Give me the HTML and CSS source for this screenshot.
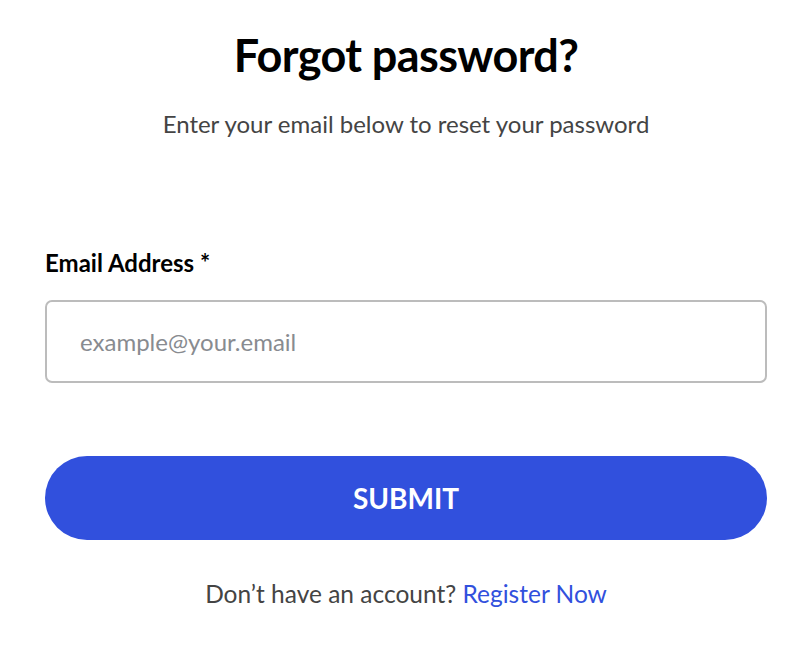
FILE: index.html
```html
<!DOCTYPE html>
<html lang="en">
  <head>
    <meta charset="UTF-8" />
    <meta name="viewport" content="width=device-width, initial-scale=1.0" />
    <title>Forgot password</title>
    <link rel="stylesheet" href="styles.css">
  </head>

  <body>
    <div class="container">
      <h1 class="title">Forgot password?</h1>
      <p class="subtitle">Enter your email below to reset your password</p>

      <form class="reset-form">
        <label class="field-label" for="email">Email Address *</label>
        <input id="email" class="field-input" type="email" placeholder="example@your.email" />
        <button class="submit-btn" type="button">SUBMIT</button>
      </form>

      <p class="register">Don’t have an account? <a href="#">Register Now</a></p>
    </div>
  </body>
</html>
```

FILE: styles.css
```css
body {
  margin: 0;
  background-color: #fff;
  font-family: Lato, "Noto Sans", sans-serif;
  color: #000;
}

.container {
  padding: 0 45px;
  display: flex;
  flex-direction: column;
}

.title {
  margin: 23px 0 0;
  text-align: center;
  font-size: 45px;
  font-weight: 700;
  line-height: 64px;
  letter-spacing: -0.6px;
}

.subtitle {
  margin: 22px 0 0;
  text-align: center;
  font-size: 24px;
  line-height: 30px;
  color: #444;
}

.reset-form {
  display: flex;
  flex-direction: column;
  margin-top: 109px;
}

.field-label {
  font-size: 24px;
  font-weight: 700;
  line-height: 30px;
}

.field-input {
  margin-top: 22px;
  height: 83px;
  box-sizing: border-box;
  border: 2px solid #bcbcbc;
  border-radius: 7px;
  padding: 0 33px;
  font-family: inherit;
  font-size: 24px;
  color: #222;
  outline: none;
}
.field-input::placeholder {
  color: #888b90;
}

.submit-btn {
  margin-top: 73px;
  height: 84px;
  border: none;
  border-radius: 42px;
  background-color: #3150dd;
  color: #fff;
  font-family: inherit;
  font-size: 28px;
  font-weight: 700;
  cursor: pointer;
}

.register {
  margin: 38px 0 0;
  text-align: center;
  font-size: 24.5px;
  line-height: 32px;
  color: #444;
}
.register a {
  color: #3150dd;
  text-decoration: none;
}
```
